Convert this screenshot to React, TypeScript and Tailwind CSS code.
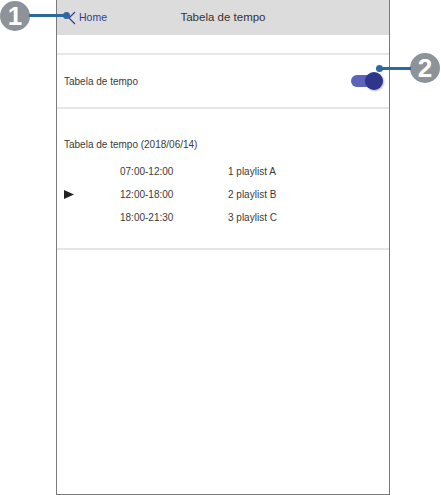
const rows = [
  { time: "07:00-12:00", name: "1 playlist A", active: false },
  { time: "12:00-18:00", name: "2 playlist B", active: true },
  { time: "18:00-21:30", name: "3 playlist C", active: false },
];

function Callout({ n }: { n: string }) {
  return (
    <div className="flex h-[30px] w-[30px] items-center justify-center rounded-full bg-[#8e939a] text-[26px] font-semibold leading-none text-white">
      {n}
    </div>
  );
}

export default function App() {
  return (
    <div
      className="relative h-[495px] w-[441px] overflow-hidden bg-white text-[#3a3a3a]"
      style={{ fontFamily: '"Liberation Sans", Arial, sans-serif' }}
    >
      <div className="ml-[56px] flex h-[495px] w-[334px] flex-col border-x border-b border-[#7a7a7a]">
        {/* header */}
        <div className="relative flex h-[35px] items-center justify-center bg-[#dcdcdc]">
          <div className="absolute left-[11px] top-[10px] flex items-center gap-[3px] text-[10.5px] text-[#2f3c96]">
            <svg width="8" height="14" viewBox="0 0 8 14">
              <path d="M7 1 L1 7 L7 13" fill="none" stroke="#2f3c96" strokeWidth="1.2" />
            </svg>
            <span>Home</span>
          </div>
          <span className="text-[11.5px] text-[#333]">Tabela de tempo</span>
        </div>

        <div className="h-[18px]" />
        <div className="h-[2px] bg-[#e6e6e6]" />

        {/* toggle row */}
        <div className="flex h-[52px] items-center justify-between pl-[7px] pr-[6px]">
          <span className="text-[10px]">Tabela de tempo</span>
          <div className="relative h-[18px] w-[32px]">
            <div className="absolute left-0 top-[3px] h-[12px] w-[28px] rounded-full bg-[#5c63b8]" />
            <div className="absolute right-0 top-0 h-[18px] w-[18px] rounded-full bg-[#2d368a] shadow-[1px_1px_2px_rgba(0,0,0,0.3)]" />
          </div>
        </div>
        <div className="h-[2px] bg-[#e6e6e6]" />

        {/* schedule */}
        <div className="flex h-[139px] flex-col pl-[7px] pt-[28px]">
          <span className="text-[10px]">Tabela de tempo (2018/06/14)</span>
          <div className="mt-[13px] flex flex-col gap-[11px]">
            {rows.map((r) => (
              <div key={r.time} className="flex h-[12px] items-center text-[10px]">
                <div className="w-[56px]">
                  {r.active && (
                    <svg width="10" height="9" viewBox="0 0 10 9">
                      <path d="M0 0 L10 4.5 L0 9 Z" fill="#222" />
                    </svg>
                  )}
                </div>
                <span className="w-[108px]">{r.time}</span>
                <span>{r.name}</span>
              </div>
            ))}
          </div>
        </div>
        <div className="h-[2px] bg-[#e6e6e6]" />
      </div>

      {/* callout 1 */}
      <div className="absolute left-0 top-[1px]">
        <Callout n="1" />
      </div>
      <div className="absolute left-[29px] top-[14px] h-[3px] w-[37px] bg-[#2b69a3]" />
      <div className="absolute left-[63px] top-[12px] h-[7px] w-[7px] rounded-full bg-[#2b69a3]" />

      {/* callout 2 */}
      <div className="absolute left-[410px] top-[53px]">
        <Callout n="2" />
      </div>
      <div className="absolute left-[381px] top-[67px] h-[3px] w-[30px] bg-[#2b69a3]" />
      <div className="absolute left-[376px] top-[65px] h-[7px] w-[7px] rounded-full bg-[#2b69a3]" />
    </div>
  );
}
